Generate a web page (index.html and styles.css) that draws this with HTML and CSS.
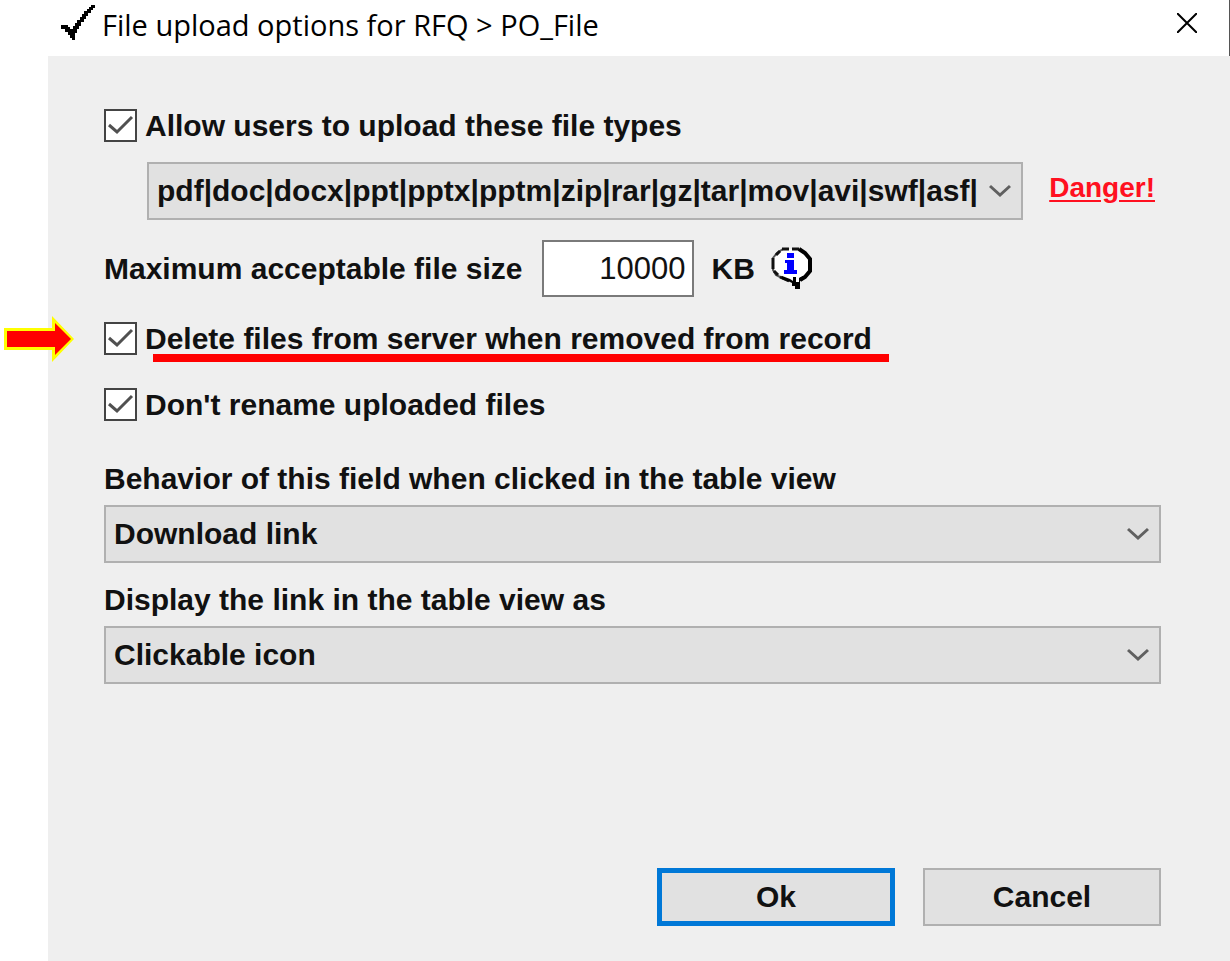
FILE: index.html
```html
<!DOCTYPE html>
<html lang="en">
<head>
    <meta charset="UTF-8">
    <meta name="viewport" content="width=device-width, initial-scale=1.0">
    <title>File upload options for RFQ &gt; PO_File</title>
    <link rel="stylesheet" href="styles.css">
</head>
<body>
    <header class="titlebar">
        <svg class="logo" width="34" height="36" viewBox="0 0 34 36" aria-hidden="true">
            <path d="M0 20h7v2h2v2h3v-3h2v-3h2v-3h3v-3h2V9h2V6h3V4h2V2h2V0h4v3h-2v2h-2v3h-3v3h-2v3h-2v3h-3v4h-2v3h-2v4h-2v7h-3v-2H9v-3H7v-3H4v-3H0z"/>
        </svg>
        <h1>File upload options for RFQ &gt; PO_File</h1>
        <button type="button" class="close" aria-label="Close">
            <svg width="20" height="20" viewBox="0 0 20 20"><path d="M0 0l20 20M20 0L0 20" stroke="#000" stroke-width="2"/></svg>
        </button>
    </header>
    <form class="dialog">
        <div class="row">
            <input type="checkbox" id="allowTypes" checked>
            <label for="allowTypes">Allow users to upload these file types</label>
        </div>
        <div class="row types">
            <select id="fileTypes" aria-label="File types">
                <option>pdf|doc|docx|ppt|pptx|pptm|zip|rar|gz|tar|mov|avi|swf|asf|</option>
            </select>
            <a href="#" class="danger">Danger!</a>
        </div>
        <div class="row size">
            <label for="maxSize">Maximum acceptable file size</label>
            <input type="text" id="maxSize" value="10000">
            <span>KB</span>
            <button type="button" class="info" aria-label="Help">
                <svg width="42" height="43" viewBox="0 0 42 43">
                    <path d="M12 2h16l6 4 5 6v12l-5 6-5 3v7h-3l-3-7-6-2-7-3-5-4-3-5V11l4-5z" fill="#fff"/>
                    <path d="M12 2L6 6 2 11v12l3 5 6 3 7 3" fill="none" stroke="#555" stroke-width="2"/>
                    <path d="M11 2h7m3 0h7M9 4L5 8M2 11v11M3 24l4 4M9 30l9 4" fill="none" stroke="#111" stroke-width="3"/>
                    <path d="M28 2l6 4 5 6v12l-5 6-5 3" fill="none" stroke="#000" stroke-width="4"/>
                    <path d="M11 29l8 3 3 2v-4h3v5h3v-4l4-2v4l-3 1v8h-5v-3h-3v-3l-4-2-6-2z"/>
                    <path d="M16 6h7v5h-7zM14 13h9v10h3v4H13v-4h3v-7h-2z" fill="#00f"/>
                </svg>
            </button>
        </div>
        <div class="row delete">
            <svg class="arrow" width="70" height="46" viewBox="0 0 70 46" aria-hidden="true">
                <path d="M0 12h48V0l22 23-22 23V34H0z" fill="#ff0"/>
                <path d="M3 15h48V7l16 16-16 16v-8H3z" fill="#f00"/>
            </svg>
            <input type="checkbox" id="deleteFiles" checked>
            <label for="deleteFiles" class="marked">Delete files from server when removed from record</label>
        </div>
        <div class="row rename">
            <input type="checkbox" id="keepNames" checked>
            <label for="keepNames">Don't rename uploaded files</label>
        </div>
        <div class="field">
            <label for="behavior">Behavior of this field when clicked in the table view</label>
            <select id="behavior">
                <option>Download link</option>
            </select>
        </div>
        <div class="field">
            <label for="display">Display the link in the table view as</label>
            <select id="display">
                <option>Clickable icon</option>
            </select>
        </div>
        <div class="buttons">
            <button type="submit" class="btn ok">Ok</button>
            <button type="button" class="btn">Cancel</button>
        </div>
    </form>
</body>
</html>
```
FILE: styles.css
```css
* {
    box-sizing: border-box;
}
body {
    margin: 0;
    min-height: 100vh;
    display: flex;
    flex-direction: column;
    background-color: #fff;
    color: #111;
    font: bold 30px/36px "Liberation Sans", Arial, sans-serif;
}
.titlebar {
    display: flex;
    align-items: center;
    height: 56px;
    padding: 0 32px 10px 61px;
    border-right: 1px solid #555;
}
.titlebar h1 {
    flex: 1;
    margin: 3px 0 0 7px;
    font: 29px/40px "Open Sans", "Segoe UI", sans-serif;
    color: #000;
}
.close, .info {
    display: flex;
    padding: 0;
    border: none;
    background: none;
    cursor: pointer;
}
.dialog {
    flex: 1;
    display: flex;
    flex-direction: column;
    margin-left: 48px;
    padding: 53px 69px 35px 56px;
    background-color: #efefef;
}
.row {
    display: flex;
    align-items: center;
}
input[type="checkbox"] {
    appearance: none;
    width: 33px;
    height: 33px;
    margin: 0 8px 0 0;
    border: 2px solid #444;
    background: #fff url("data:image/svg+xml,%3Csvg xmlns='http://www.w3.org/2000/svg' viewBox='0 0 29 29'%3E%3Cpath d='M3 14l8 7L26 6' fill='none' stroke='%23505050' stroke-width='3'/%3E%3C/svg%3E") center no-repeat;
}
input[type="checkbox"]:not(:checked) {
    background-image: none;
}
select {
    appearance: none;
    width: 100%;
    height: 58px;
    padding: 0 46px 0 8px;
    border: 2px solid #b0b0b0;
    border-radius: 0;
    background: #e1e1e1 url("data:image/svg+xml,%3Csvg xmlns='http://www.w3.org/2000/svg' width='22' height='14'%3E%3Cpath d='M1 2l10 9L21 2' fill='none' stroke='%23606060' stroke-width='3'/%3E%3C/svg%3E") right 10px center no-repeat;
    color: #111;
    font: inherit;
}
.types {
    margin: 20px 0 20px 43px;
}
.types select {
    flex: 1;
    padding-right: 40px;
}
.danger {
    margin: 0 6px 6px 26px;
    color: #ff1020;
    font-size: 28px;
    text-underline-offset: 3px;
}
.size {
    margin-bottom: 25px;
}
.size input {
    width: 152px;
    height: 57px;
    margin: 0 18px 0 19px;
    padding: 0 6px;
    border: 2px solid #7a7a7a;
    color: #111;
    font: 31px "Liberation Sans", Arial, sans-serif;
    text-align: right;
}
.info {
    margin-left: 16px;
}
.delete {
    position: relative;
    margin-bottom: 33px;
}
/* callout arrow in the left margin */
.arrow {
    position: absolute;
    left: -100px;
    top: -6px;
}
.marked {
    position: relative;
}
.marked::after {
    content: "";
    position: absolute;
    left: 8px;
    right: -17px;
    bottom: -5px;
    height: 8px;
    background-color: #f00;
}
.row label {
    margin: -2px 0;
}
.rename {
    margin-bottom: 40px;
}
.field {
    margin-bottom: 19px;
}
.field label {
    display: block;
    margin-bottom: 8px;
}
.buttons {
    display: flex;
    justify-content: flex-end;
    gap: 28px;
    margin-top: auto;
}
.btn {
    width: 238px;
    height: 58px;
    border: 2px solid #b0b0b0;
    background-color: #e1e1e1;
    color: #111;
    font: inherit;
    cursor: pointer;
}
.btn.ok {
    border: 5px solid #0078d7;
}
.btn:hover {
    background-color: #e5f1fb;
}
```
